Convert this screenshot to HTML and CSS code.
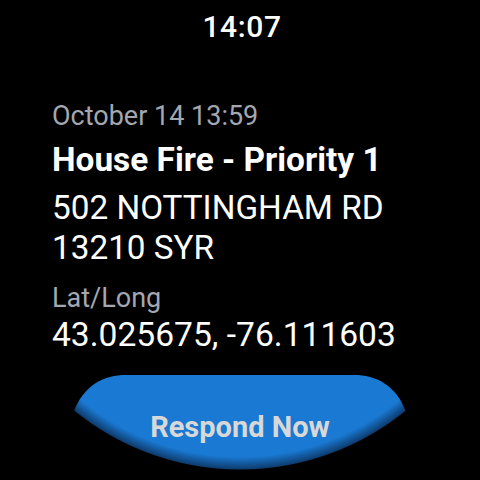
FILE: index.html
```html
<!DOCTYPE html>
<html>
<head>
<meta charset="utf-8">
<link rel="stylesheet" href="styles.css">
</head>
<body>
<div class="screen">
  <div class="clock">14:07</div>
  <div class="details">
    <div class="date">October 14 13:59</div>
    <div class="title">House Fire - Priority 1</div>
    <div class="address">502 NOTTINGHAM RD<br>13210 SYR</div>
    <div class="label">Lat/Long</div>
    <div class="coords">43.025675, -76.111603</div>
  </div>
  <div class="respond">Respond Now</div>
</div>
</body>
</html>
```
FILE: styles.css
```css
html, body {
  margin: 0;
  padding: 0;
  background: #000;
}
.screen {
  width: 480px;
  height: 480px;
  overflow: hidden;
  background: #000;
  display: flex;
  flex-direction: column;
  font-family: Roboto, "Liberation Sans", sans-serif;
  color: #fff;
}
.clock {
  padding-top: 12px;
  text-align: center;
  font-size: 30px;
  line-height: 30px;
  font-weight: 500;
  letter-spacing: 0.6px;
  padding-left: 4px;
}
.details {
  margin-top: 56px;
  padding-left: 52px;
  display: flex;
  flex-direction: column;
}
.date, .label {
  color: #a3a7b0;
  font-size: 27px;
  line-height: 36px;
}
.title {
  margin-top: 6px;
  font-size: 33.4px;
  line-height: 40px;
  font-weight: 700;
}
.address {
  margin-top: 8px;
  font-size: 33.3px;
  line-height: 40px;
}
.label {
  margin-top: 12px;
}
.coords {
  margin-top: -1px;
  font-size: 33.6px;
  line-height: 40px;
}
.respond {
  margin-top: 20px;
  margin-left: 74px;
  width: 332px;
  height: 95px;
  box-sizing: border-box;
  padding-top: 36px;
  text-align: center;
  font-size: 29px;
  line-height: 32px;
  font-weight: 700;
  color: #d8d8d8;
  background: radial-gradient(circle 263px at 166px -168px, #1a79d2 250px, #0e3d70 262px, #000 263px);
  clip-path: path('M0 36 C 10 10 30 0 52 0 L 280 0 C 302 0 322 10 332 37 A 263 263 0 0 1 0 36 Z');
}
```
